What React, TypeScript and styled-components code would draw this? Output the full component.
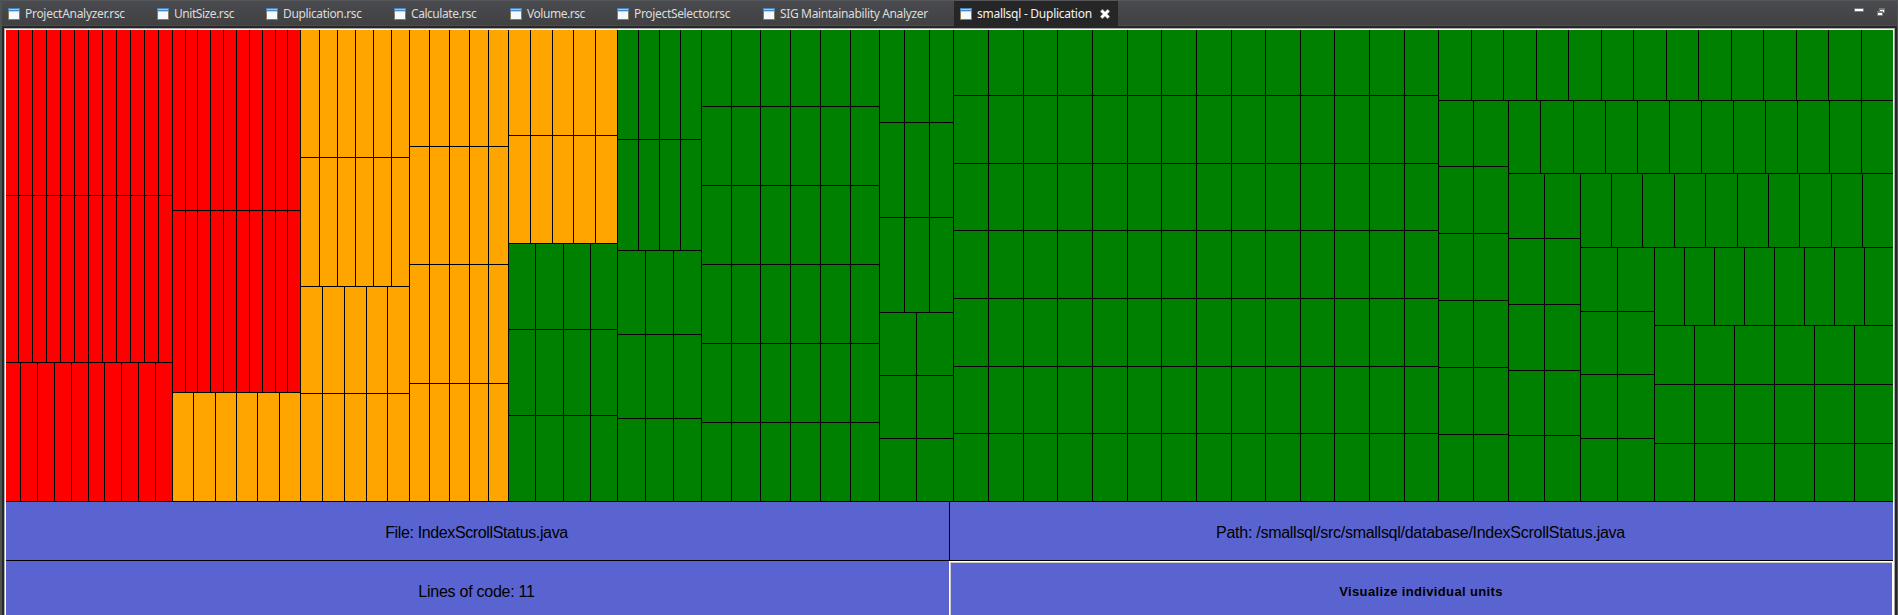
import React from "react";
import styled, { createGlobalStyle } from "styled-components";

const GlobalStyle = createGlobalStyle`
  * { box-sizing: border-box; }
  html, body { margin: 0; padding: 0; background: #262626; }
  body { width: 1898px; height: 615px; overflow: hidden; }
`;

const Window = styled.div`
  display: flex;
  flex-direction: column;
  width: 1898px;
  height: 615px;
  padding: 0 1px 0 2px;
  overflow: hidden;
  background: #4d5254;
`;

const TabBar = styled.div`
  display: flex;
  flex: none;
  height: 26px;
  padding-left: 6px;
  background: linear-gradient(#4a4b4f, #414143);
  border-top: 1px solid #55565a;
  border-bottom: 1px solid #4c4d51;
  font: 12px/24px "Noto Sans", "Open Sans", sans-serif;
  color: #dcdcdc;
`;

const Tab = styled.div<{ $width: number }>`
  display: flex;
  align-items: center;
  flex: none;
  width: ${(p) => p.$width}px;
  height: 26px;
  white-space: nowrap;
`;

const ActiveTab = styled(Tab)`
  margin-left: -6px;
  padding-left: 6px;
  background: #262626;
  color: #f4f4f4;
`;

const TabLabel = styled.span<{ $spacing: number }>`
  margin-left: 5px;
  letter-spacing: ${(p) => p.$spacing}px;
`;

const TabIcon = styled.svg`
  flex: none;
  width: 12px;
  height: 12px;
`;

const CloseIcon = styled.svg`
  flex: none;
  width: 10px;
  height: 10px;
  margin-left: auto;
  margin-right: 8px;
`;

const WindowTools = styled.svg`
  margin-left: auto;
  width: 50px;
  height: 24px;
`;

const EditorFrame = styled.div`
  flex: 1;
  min-height: 0;
  padding: 2px 2px 0 2px;
  background: #262626;
`;

const Canvas = styled.div`
  display: flex;
  flex-direction: column;
  height: 100%;
  border: 1px solid #a9a9a9;
  border-bottom: 0;
  box-shadow: inset 0 0 0 1px #fff;
  padding: 1px 1px 0 1px;
`;

const Row = styled.div`
  display: flex;
  flex: none;
`;

const Column = styled.div`
  display: flex;
  flex-direction: column;
  flex: none;
`;

const Cell = styled.div`
  border-right: 1px solid #000;
  border-bottom: 1px solid #000;
`;

const Grid = styled.div<{ $cols: string; $rows: string; $color: string; $edge: boolean }>`
  display: grid;
  flex: none;
  grid-template-columns: ${(p) => p.$cols};
  grid-template-rows: ${(p) => p.$rows};
  background: ${(p) => p.$color};
  ${(p) => p.$edge && `& > .last { border-right: 0; }`}
`;

const InfoGrid = styled.div`
  display: grid;
  flex: none;
  grid-template-columns: 944px 943px;
  grid-template-rows: 59px 60px;
  background: #5a64d0;
  color: #000;
  font: 16px "Liberation Sans", Arial, sans-serif;
`;

const InfoCell = styled.div`
  display: flex;
  align-items: center;
  justify-content: center;
  border-bottom: 1px solid #000;
  border-right: 1px solid #000;
  padding: 4px 2px 0 0;
`;

const InfoText = styled.span<{ $spacing: number }>`
  letter-spacing: ${(p) => p.$spacing}px;
`;

const PathCell = styled(InfoCell)`
  border-right: 0;
`;

const LinesCell = styled(InfoCell)`
  border: 0;
  padding: 2px 3px 0 0;
`;

const UnitsButton = styled.button`
  margin: 0 0 0 -1px;
  padding: 0;
  border: 1px solid #fff;
  border-bottom: 0;
  border-radius: 0;
  box-shadow: inset 1px 1px 0 #d0ccc8;
  background: #5a64d0;
  color: #000;
  font: bold 13px "Liberation Sans", Arial, sans-serif;
  letter-spacing: 0.35px;
`;

const RED = "#ff0000";
const ORANGE = "#ffa500";
const GREEN = "#008000";
const LEFT = 5;
const TOP = 29;
const RIGHT = 1892;
const BOTTOM = 501;

// Turns a run of boundary lines into track sizes.
const tracks = (start: number, ends: number[]) =>
  ends.map((end, i) => `${end - (i ? ends[i - 1] : start)}px`).join(" ");

type BlockProps = { x?: number; y?: number; cols: number[]; rows: number[]; color?: string };

function Block({ x = LEFT, y = TOP, cols, rows, color = GREEN }: BlockProps) {
  const edge = cols[cols.length - 1] === RIGHT;
  return (
    <Grid $cols={tracks(x, cols)} $rows={tracks(y, rows)} $color={color} $edge={edge}>
      {rows.flatMap((r) =>
        cols.map((c) => <Cell key={`${r}-${c}`} className={c === RIGHT ? "last" : undefined} />)
      )}
    </Grid>
  );
}

function Treemap() {
  return (
    <Row>
      <Column>
        <Block color={RED} cols={[18, 32, 46, 60, 74, 88, 102, 116, 130, 144, 158, 172]} rows={[195, 362]} />
        <Block color={RED} y={362} cols={[20, 37, 54, 71, 88, 104, 121, 138, 155, 172]} rows={[BOTTOM]} />
      </Column>
      <Column>
        <Block color={RED} x={172} cols={[185, 197, 210, 223, 236, 249, 262, 275, 287, 300]} rows={[210, 392]} />
        <Block color={ORANGE} x={172} y={392} cols={[193, 215, 236, 257, 279, 300]} rows={[BOTTOM]} />
      </Column>
      <Column>
        <Block color={ORANGE} x={300} cols={[319, 337, 355, 373, 391, 409]} rows={[157, 286]} />
        <Block color={ORANGE} x={300} y={286} cols={[322, 344, 366, 387, 409]} rows={[393, BOTTOM]} />
      </Column>
      <Block color={ORANGE} x={409} cols={[429, 449, 469, 488, 508]} rows={[146, 264, 383, BOTTOM]} />
      <Column>
        <Block color={ORANGE} x={508} cols={[530, 552, 573, 595, 617]} rows={[135, 243]} />
        <Block x={508} y={243} cols={[535, 563, 590, 617]} rows={[329, 415, BOTTOM]} />
      </Column>
      <Column>
        <Block x={617} cols={[638, 659, 680, 701]} rows={[139, 250]} />
        <Block x={617} y={250} cols={[645, 673, 701]} rows={[334, 418, BOTTOM]} />
      </Column>
      <Block x={701} cols={[731, 760, 790, 820, 850, 879]} rows={[106, 185, 264, 343, 422, BOTTOM]} />
      <Column>
        <Block x={879} cols={[904, 929, 953]} rows={[122, 217, 312]} />
        <Block x={879} y={312} cols={[916, 953]} rows={[375, 438, BOTTOM]} />
      </Column>
      <Block
        x={953}
        cols={[988, 1023, 1057, 1092, 1127, 1161, 1196, 1231, 1265, 1300, 1334, 1369, 1404, 1438]}
        rows={[95, 163, 230, 298, 366, 433, BOTTOM]}
      />
      <Column>
        <Block
          x={1438}
          cols={[1471, 1503, 1536, 1568, 1601, 1633, 1666, 1698, 1731, 1763, 1796, 1828, 1861, RIGHT]}
          rows={[100]}
        />
        <Row>
          <Block x={1438} y={100} cols={[1473, 1508]} rows={[166, 233, 300, 367, 434, BOTTOM]} />
          <Column>
            <Block
              x={1508}
              y={100}
              cols={[1540, 1573, 1605, 1637, 1669, 1701, 1733, 1765, 1797, 1829, 1861, RIGHT]}
              rows={[173]}
            />
            <Row>
              <Block x={1508} y={173} cols={[1544, 1580]} rows={[238, 304, 370, 435, BOTTOM]} />
              <Column>
                <Block
                  x={1580}
                  y={173}
                  cols={[1611, 1642, 1674, 1705, 1737, 1768, 1799, 1831, 1862, RIGHT]}
                  rows={[247]}
                />
                <Row>
                  <Block x={1580} y={247} cols={[1617, 1654]} rows={[311, 374, 438, BOTTOM]} />
                  <Column>
                    <Block x={1654} y={247} cols={[1684, 1714, 1744, 1774, 1804, 1834, 1864, RIGHT]} rows={[325]} />
                    <Block x={1654} y={325} cols={[1694, 1734, 1774, 1814, 1854, RIGHT]} rows={[384, 443, BOTTOM]} />
                  </Column>
                </Row>
              </Column>
            </Row>
          </Column>
        </Row>
      </Column>
    </Row>
  );
}

function FileIcon() {
  return (
    <TabIcon viewBox="0 0 12 12" shapeRendering="crispEdges">
      <rect width="12" height="12" fill="#8a7d55" />
      <rect width="12" height="3" fill="#4a86bd" />
      <rect x="1" y="1" width="10" height="1" fill="#9cc8ea" />
      <rect x="1" y="3" width="10" height="8" fill="#f3faff" />
      <rect x="1" y="3" width="10" height="1" fill="#b5d5ee" />
    </TabIcon>
  );
}

const TABS = [
  { label: "ProjectAnalyzer.rsc", width: 149, spacing: -0.29 },
  { label: "UnitSize.rsc", width: 109, spacing: -0.45 },
  { label: "Duplication.rsc", width: 128, spacing: -0.36 },
  { label: "Calculate.rsc", width: 116, spacing: -0.45 },
  { label: "Volume.rsc", width: 107, spacing: -0.45 },
  { label: "ProjectSelector.rsc", width: 146, spacing: -0.33 },
  { label: "SIG Maintainability Analyzer", width: 197, spacing: -0.35 },
];

export default function App() {
  return (
    <Window>
      <GlobalStyle />
      <TabBar>
        {TABS.map((t) => (
          <Tab key={t.label} $width={t.width}>
            <FileIcon />
            <TabLabel $spacing={t.spacing}>{t.label}</TabLabel>
          </Tab>
        ))}
        <ActiveTab $width={164}>
          <FileIcon />
          <TabLabel $spacing={-0.26}>smallsql - Duplication</TabLabel>
          <CloseIcon viewBox="0 0 10 10">
            <path d="M1 1L9 9M9 1L1 9" stroke="#666" strokeWidth="4" />
            <path d="M1.5 1.5L8.5 8.5M8.5 1.5L1.5 8.5" stroke="#fff" strokeWidth="2.8" />
          </CloseIcon>
        </ActiveTab>
        <WindowTools viewBox="0 0 50 24" shapeRendering="crispEdges">
          <rect x="7" y="7" width="10" height="4" fill="#77787a" />
          <rect x="8" y="8" width="8" height="2" fill="#fff" />
          <rect x="32" y="7" width="6" height="5" fill="#77787a" />
          <rect x="30" y="10" width="6" height="5" fill="#77787a" />
          <path d="M33 9h4v2h-1v-1h-3z" fill="#fff" />
          <rect x="31" y="12" width="4" height="2" fill="#fff" />
        </WindowTools>
      </TabBar>
      <EditorFrame>
        <Canvas>
          <Treemap />
          <InfoGrid>
            <InfoCell>
              <InfoText $spacing={-0.37}>File: IndexScrollStatus.java</InfoText>
            </InfoCell>
            <PathCell>
              <InfoText $spacing={-0.27}>Path: /smallsql/src/smallsql/database/IndexScrollStatus.java</InfoText>
            </PathCell>
            <LinesCell>
              <InfoText $spacing={-0.25}>Lines of code: 11</InfoText>
            </LinesCell>
            <UnitsButton>Visualize individual units</UnitsButton>
          </InfoGrid>
        </Canvas>
      </EditorFrame>
    </Window>
  );
}
